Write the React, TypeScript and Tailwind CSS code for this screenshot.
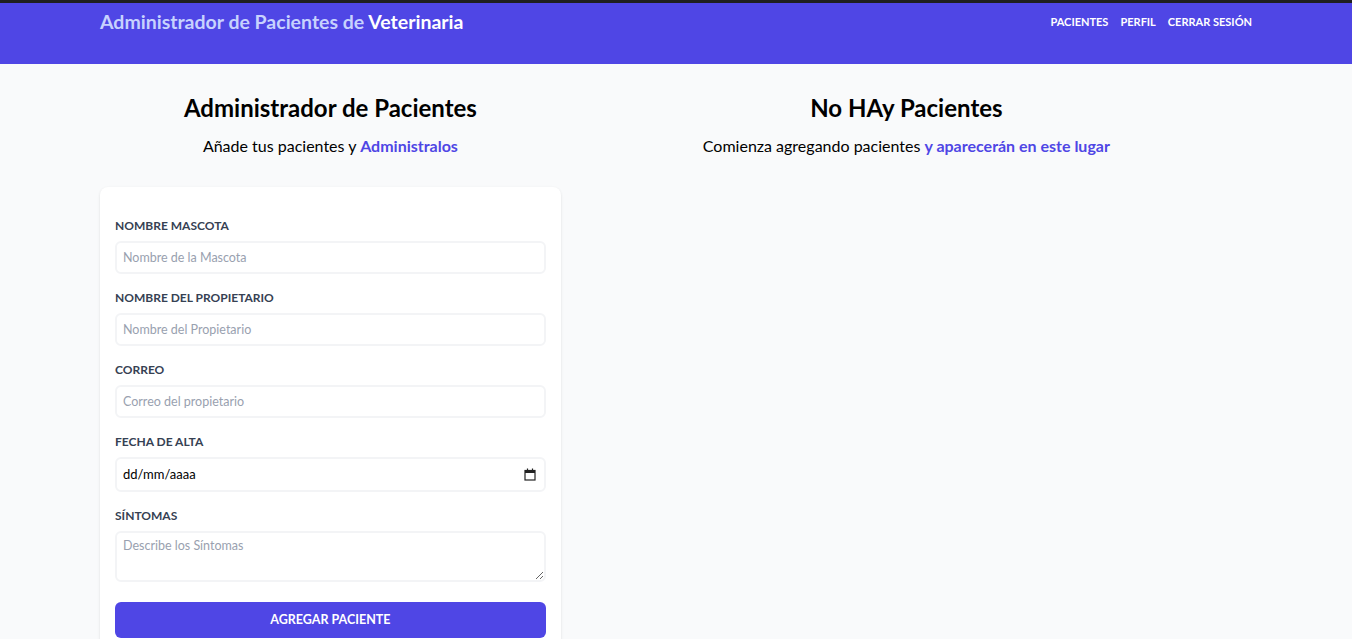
import React from 'react';

const Field: React.FC<{ label: string; children: React.ReactNode }> = ({ label, children }) => (
	<div className="mb-[14px]">
		<label className="block text-gray-700 uppercase font-bold text-[12px] leading-5">{label}</label>
		<div className="mt-[5px]">{children}</div>
	</div>
);

const inputCls =
	'block w-full h-[33px] border-2 border-gray-100 rounded-md px-[6px] text-[12.5px] placeholder-gray-400 outline-none';

export default function App() {
	return (
		<div className="min-h-screen bg-gray-50" style={{ fontFamily: 'Lato, "Noto Sans", sans-serif' }}>
			<div className="h-[3px] bg-[#1f1f1f]" />
			<header className="bg-[#4f46e5] h-[61px]">
				<div className="max-w-[1152px] mx-auto flex justify-between items-start pt-[5px]">
					<h1 className="text-[#c7d2fe] font-bold text-[19.5px] leading-7">
						Administrador de Pacientes de <span className="text-white">Veterinaria</span>
					</h1>
					<nav className="flex gap-[12px] text-white text-[11px] font-bold uppercase leading-7">
						<a href="#">Pacientes</a>
						<a href="#">Perfil</a>
						<a href="#">Cerrar Sesión</a>
					</nav>
				</div>
			</header>

			<main className="max-w-[1152px] mx-auto flex pt-[28px]">
				<div className="w-2/5">
					<h2 className="text-2xl font-bold text-center leading-8 text-black">Administrador de Pacientes</h2>
					<p className="text-base text-center mt-[10px] mb-[29px]">
						Añade tus pacientes y <span className="text-[#4f46e5] font-bold">Administralos</span>
					</p>
					<form className="bg-white rounded-lg shadow-sm px-[15px] pt-[29px] pb-4">
						<Field label="Nombre Mascota">
							<input className={inputCls} placeholder="Nombre de la Mascota" />
						</Field>
						<Field label="Nombre del Propietario">
							<input className={inputCls} placeholder="Nombre del Propietario" />
						</Field>
						<Field label="Correo">
							<input className={inputCls} placeholder="Correo del propietario" />
						</Field>
						<Field label="Fecha de Alta">
							<div className="flex items-center justify-between h-[35px] border-2 border-gray-100 rounded-md px-[6px] text-[13px] text-black bg-white">
								<span>dd/mm/aaaa</span>
								<svg width="12" height="13" viewBox="0 0 12 13" fill="none" className="mr-[2px]">
									<rect x="1" y="2.5" width="10" height="9.5" stroke="#222" strokeWidth="1.2" />
									<rect x="1" y="2.5" width="10" height="2.5" fill="#222" />
									<path d="M3.5 0.5v2M8.5 0.5v2" stroke="#222" strokeWidth="1.2" />
								</svg>
							</div>
						</Field>
						<Field label="Síntomas">
							<textarea className="block w-full h-[51px] border-2 border-gray-100 rounded-md px-[6px] py-[4px] text-[12.5px] placeholder-gray-400 outline-none resize-y" placeholder="Describe los Síntomas" />
						</Field>
						<button type="button" className="w-full h-[36px] mt-[6px] bg-[#4f46e5] rounded-md text-white uppercase font-bold text-[12.5px]">
							Agregar Paciente
						</button>
					</form>
				</div>
				<div className="w-3/5">
					<h2 className="text-2xl font-bold text-center leading-8 text-black">No HAy Pacientes</h2>
					<p className="text-base text-center mt-[10px]">
						Comienza agregando pacientes <span className="text-[#4f46e5] font-bold">y aparecerán en este lugar</span>
					</p>
				</div>
			</main>
		</div>
	);
}
